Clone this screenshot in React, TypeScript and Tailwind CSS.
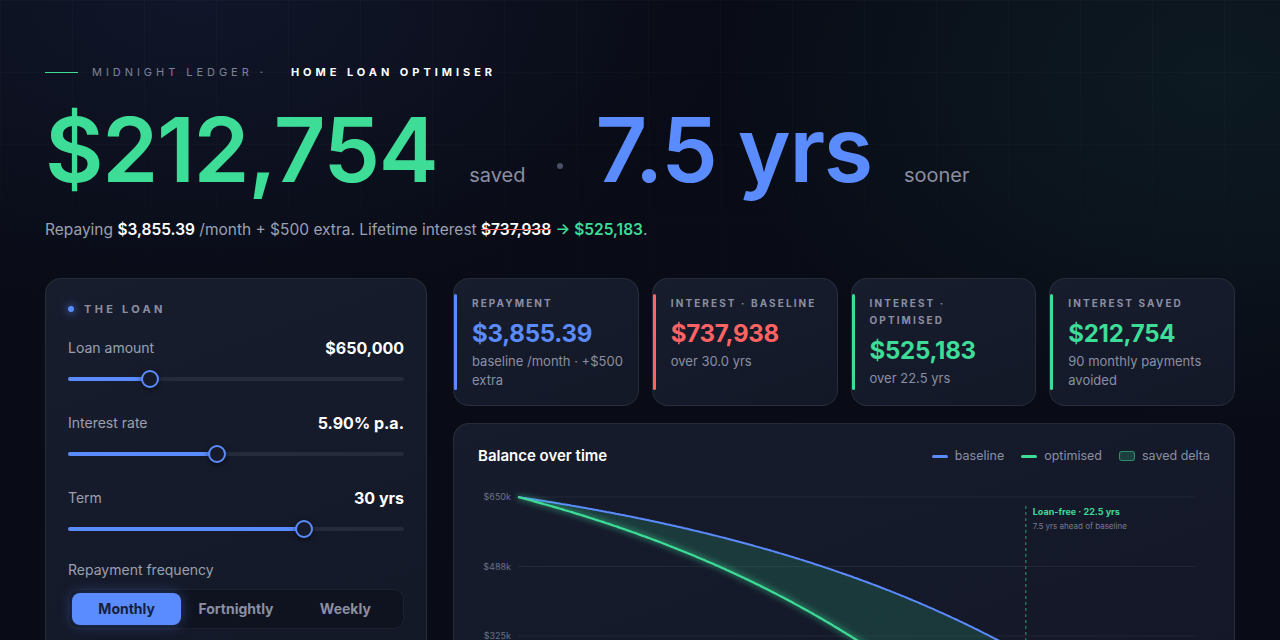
import React from "react";

const sliders = [
  { label: "Loan amount", value: "$650,000", pct: 24.4 },
  { label: "Interest rate", value: "5.90% p.a.", pct: 44.3 },
  { label: "Term", value: "30 yrs", pct: 70.2 },
];

const stats = [
  {
    label: "Repayment",
    value: "$3,855.39",
    sub: "baseline /month · +$500 extra",
    bar: "bg-[#5b8cff]",
    color: "text-[#5b8cff]",
  },
  {
    label: "Interest · Baseline",
    value: "$737,938",
    sub: "over 30.0 yrs",
    bar: "bg-[#ff6363]",
    color: "text-[#ff6363]",
  },
  {
    label: "Interest · Optimised",
    value: "$525,183",
    sub: "over 22.5 yrs",
    bar: "bg-[#3ddc97]",
    color: "text-[#3ddc97]",
  },
  {
    label: "Interest saved",
    value: "$212,754",
    sub: "90 monthly payments avoided",
    bar: "bg-[#3ddc97]",
    color: "text-[#3ddc97]",
  },
];

// chart geometry (svg coords)
const X0 = 40;
const X1 = 717;
const Y0 = 289;
const H = 278;
const MAX = 650000;

function balances(payment: number) {
  const r = 0.059 / 12;
  const out: number[] = [];
  let b = 650000;
  for (let k = 0; k <= 360; k++) {
    out.push(Math.max(b, 0));
    b = b * (1 + r) - payment;
  }
  return out;
}

const px = (k: number) => X0 + (k / 360) * (X1 - X0);
const py = (b: number) => Y0 - (b / MAX) * H;

function BalanceChart() {
  const base = balances(3855.39);
  const opt = balances(4355.39);
  const optEnd = opt.findIndex((b) => b <= 0);
  const basePath = base.map((b, k) => `${k ? "L" : "M"}${px(k).toFixed(1)},${py(b).toFixed(1)}`).join(" ");
  const optPath = opt
    .slice(0, optEnd + 1)
    .map((b, k) => `${k ? "L" : "M"}${px(k).toFixed(1)},${py(b).toFixed(1)}`)
    .join(" ");
  const area =
    opt.map((b, k) => `${k ? "L" : "M"}${px(k).toFixed(1)},${py(b).toFixed(1)}`).join(" ") +
    " " +
    base
      .map((b, k) => ({ b, k }))
      .reverse()
      .map(({ b, k }) => `L${px(k).toFixed(1)},${py(b).toFixed(1)}`)
      .join(" ") +
    " Z";

  const ticks = [
    { v: 650000, t: "$650k" },
    { v: 487500, t: "$488k" },
    { v: 325000, t: "$325k" },
    { v: 162500, t: "$163k" },
    { v: 0, t: "$0" },
  ];

  return (
    <svg width="732" height="320" viewBox="0 0 732 320" className="mt-5 block">
      <defs>
        <filter id="glow" x="-10%" y="-10%" width="120%" height="120%">
          <feGaussianBlur stdDeviation="3" result="b" />
          <feMerge>
            <feMergeNode in="b" />
            <feMergeNode in="SourceGraphic" />
          </feMerge>
        </filter>
      </defs>
      {ticks.map((t) => (
        <g key={t.t}>
          <line x1={X0} x2={X1} y1={py(t.v)} y2={py(t.v)} stroke="#ffffff" strokeOpacity="0.06" />
          <text
            x={33}
            y={py(t.v) + 3}
            textAnchor="end"
            fontSize="9"
            fill="#6b7186"
            fontFamily="Inter, sans-serif"
          >
            {t.t}
          </text>
        </g>
      ))}
      <path d={area} fill="#3ddc97" fillOpacity="0.17" />
      <path d={basePath} fill="none" stroke="#5b8cff" strokeWidth="2" />
      <path d={optPath} fill="none" stroke="#3ddc97" strokeWidth="2.2" filter="url(#glow)" />
      <line
        x1={px(optEnd)}
        x2={px(optEnd)}
        y1={20}
        y2={Y0}
        stroke="#3ddc97"
        strokeOpacity="0.45"
        strokeWidth="1.5"
        strokeDasharray="3 3"
      />
      <text x={px(optEnd) + 7} y={29} fontSize="9" fontWeight="700" fill="#3ddc97" fontFamily="Inter, sans-serif">
        Loan-free · 22.5 yrs
      </text>
      <text x={px(optEnd) + 7} y={43} fontSize="8" fill="#767c90" fontFamily="Inter, sans-serif">
        7.5 yrs ahead of baseline
      </text>
    </svg>
  );
}

function App() {
  return (
    <div className="relative min-h-screen overflow-hidden bg-[#090c16] font-['Inter',sans-serif] text-white">
      <div className="pointer-events-none absolute inset-0 bg-[radial-gradient(ellipse_60%_55%_at_15%_0%,rgba(60,80,160,0.14),transparent_70%),radial-gradient(ellipse_55%_60%_at_95%_10%,rgba(40,120,110,0.13),transparent_70%)]" />
      <div className="pointer-events-none absolute inset-0 bg-[linear-gradient(rgba(255,255,255,0.022)_1px,transparent_1px),linear-gradient(90deg,rgba(255,255,255,0.022)_1px,transparent_1px)] bg-[size:72px_72px] [mask-image:linear-gradient(to_bottom,black,transparent_45%)]" />

      <div className="relative px-[45px] pt-16">
        <div className="flex items-center text-[11px]/4 tracking-[0.36em]">
          <span className="mr-[14px] h-px w-[33px] bg-[#3ddc97]" />
          <span className="text-[#7d8396]">MIDNIGHT LEDGER ·</span>
          <span className="ml-[24px] font-bold text-white">HOME LOAN OPTIMISER</span>
        </div>

        <div className="mt-[25px] flex items-baseline gap-8">
          <span className="text-[90px] font-semibold leading-none tracking-[-0.015em] text-[#3ddc97]">$212,754</span>
          <span className="text-xl text-[#8a8fa3]">saved</span>
          <span className="inline-block h-[6px] w-[6px] -translate-y-[13px] rounded-full bg-[#4b5063]" />
          <span className="text-[90px] font-semibold leading-none tracking-[-0.015em] text-[#5b8cff]">7.5 yrs</span>
          <span className="text-xl text-[#8a8fa3]">sooner</span>
        </div>

        <p className="mt-[23px] text-[15.5px]/6 text-[#9aa0b2]">
          Repaying <span className="font-semibold text-white">$3,855.39</span> /month + $500 extra. Lifetime interest{" "}
          <span className="font-semibold text-white line-through decoration-[#ff6363]">$737,938</span>{" "}
          <span className="font-semibold text-[#3ddc97]">→ $525,183</span>.
        </p>

        <div className="mt-[36px] grid grid-cols-[382px_1fr] gap-[26px]">
          {/* loan inputs */}
          <div className="h-[420px] rounded-2xl border border-white/[0.08] bg-[linear-gradient(160deg,#181d2e,#131827)] px-[22px] pt-[21px]">
            <div className="flex items-center gap-[10px] text-[11px]/[18px] font-bold tracking-[0.3em] text-[#8a8fa3]">
              <span className="h-[6px] w-[6px] rounded-full bg-[#5b8cff] shadow-[0_0_8px_#5b8cff]" />
              THE LOAN
            </div>
            {sliders.map((s, i) => (
              <div key={s.label} className={i === 0 ? "mt-5" : "mt-[25px]"}>
                <div className="flex h-5 items-center justify-between">
                  <span className="text-sm/5 text-[#9aa0b2]">{s.label}</span>
                  <span className="text-base/5 font-bold text-white">{s.value}</span>
                </div>
                <div className="relative mt-3 flex h-[18px] items-center">
                  <div className="h-1 w-full rounded-full bg-[#262b3b]">
                    <div className="h-1 rounded-full bg-[#5b8cff]" style={{ width: `${s.pct}%` }} />
                  </div>
                  <span
                    className="absolute top-0 -ml-[9px] h-[18px] w-[18px] rounded-full border-[2.5px] border-[#5b8cff] bg-[#161b2b] shadow-[0_2px_6px_rgba(0,0,0,0.5)]"
                    style={{ left: `${s.pct}%` }}
                  />
                </div>
              </div>
            ))}
            <div className="mt-[22px] text-sm/5 text-[#9aa0b2]">Repayment frequency</div>
            <div className="mt-[9px] flex h-10 rounded-[10px] border border-white/[0.06] bg-[#0f1320] p-[3px]">
              <button className="flex-1 rounded-lg bg-[#5b8cff] text-sm/5 font-bold text-[#16203a] shadow-[0_0_14px_rgba(91,140,255,0.35)]">
                Monthly
              </button>
              <button className="flex-1 text-sm/5 font-bold text-[#8a8fa3]">Fortnightly</button>
              <button className="flex-1 text-sm/5 font-bold text-[#8a8fa3]">Weekly</button>
            </div>
          </div>

          {/* right column */}
          <div>
            <div className="grid grid-cols-4 gap-[13px]">
              {stats.map((s) => (
                <div
                  key={s.label}
                  className="relative h-[128px] rounded-2xl border border-white/[0.08] bg-[linear-gradient(160deg,#181d2e,#131827)] pl-[18px] pr-[10px] pt-4"
                >
                  <span className={`absolute left-0 top-[15px] bottom-[15px] w-[3px] rounded-full ${s.bar}`} />
                  <div className="max-w-[148px] text-[10px]/[17px] font-bold uppercase tracking-[0.21em] text-[#8a8fa3]">
                    {s.label}
                  </div>
                  <div className={`mt-[7px] text-2xl/[30px] font-bold tracking-[-0.01em] ${s.color}`}>{s.value}</div>
                  <div className="mt-[3px] text-[13px]/[19px] text-[#8a8fa3]">{s.sub}</div>
                </div>
              ))}
            </div>

            <div className="mt-[17px] h-[380px] rounded-2xl border border-white/[0.08] bg-[linear-gradient(160deg,#171c2d,#121626)] px-6 pt-[22px]">
              <div className="flex h-5 items-center justify-between">
                <span className="text-[15px]/5 font-semibold text-white">Balance over time</span>
                <div className="flex items-center gap-[17px] text-[12.5px]/5 text-[#8a8fa3]">
                  <span className="flex items-center gap-[7px]">
                    <span className="h-[3px] w-4 rounded-full bg-[#5b8cff]" />
                    baseline
                  </span>
                  <span className="flex items-center gap-[7px]">
                    <span className="h-[3px] w-4 rounded-full bg-[#3ddc97]" />
                    optimised
                  </span>
                  <span className="flex items-center gap-[7px]">
                    <span className="h-[10px] w-4 rounded-[3px] border border-[#3ddc97]/50 bg-[#3ddc97]/20" />
                    saved delta
                  </span>
                </div>
              </div>
              <BalanceChart />
            </div>
          </div>
        </div>
      </div>
    </div>
  );
}

export default App;
